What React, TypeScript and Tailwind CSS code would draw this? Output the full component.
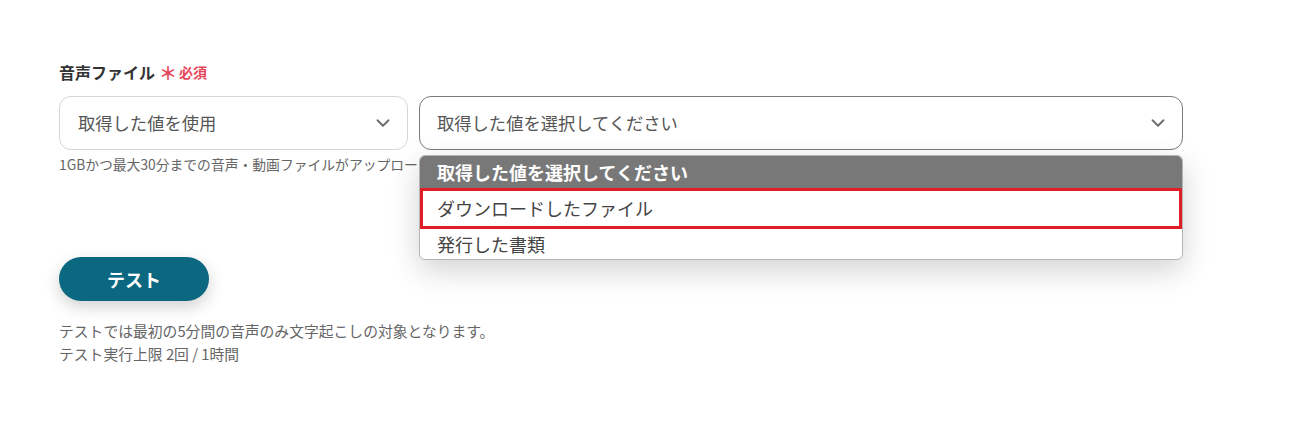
import React from "react";
import { ChevronDown } from "lucide-react";

const font = { fontFamily: '"Noto Sans CJK JP", "Noto Sans", sans-serif' };

export default function App() {
  return (
    <div className="w-[1312px] h-[428px] bg-white pl-[59px] pt-[60px]" style={font}>
      <div className="flex items-center h-[24px] gap-[4px]">
        <span className="text-[16px] font-bold text-[#333333]">音声ファイル</span>
        <span className="text-[14px] font-bold text-[#e8475b] flex items-center gap-[2px]">
          <span className="text-[18px] leading-none">＊</span>
          <span>必須</span>
        </span>
      </div>
      <div className="mt-[12px] flex gap-[11px]">
        <div className="w-[349px] h-[54px] rounded-[12px] border border-[#d6d6d6] flex items-center justify-between pl-[18px] pr-[13px]">
          <span className="text-[17.3px] text-[#555555]">取得した値を使用</span>
          <ChevronDown size={22} color="#6b6b6b" strokeWidth={2} />
        </div>
        <div className="relative w-[764px]">
          <div className="h-[54px] rounded-[12px] border border-[#7a7a7a] flex items-center justify-between pl-[17px] pr-[13px]">
            <span className="text-[17.3px] text-[#555555]">取得した値を選択してください</span>
            <ChevronDown size={22} color="#6b6b6b" strokeWidth={2} />
          </div>
          <div className="absolute left-0 top-[59px] w-full rounded-[6px] border border-[#b5b5b5] bg-white overflow-hidden shadow-[0_10px_30px_rgba(0,0,0,0.18)] z-10">
            <div className="h-[32px] bg-[#787878] flex items-center pl-[17px] pt-[1px] text-[18px] font-bold text-white">
              取得した値を選択してください
            </div>
            <div className="h-[41px] border-[3px] border-[#e41e26] flex items-center pl-[14px] text-[18px] text-[#444444]">
              ダウンロードしたファイル
            </div>
            <div className="h-[30px] flex items-center pl-[17px] text-[18px] text-[#444444]">
              発行した書類
            </div>
          </div>
        </div>
      </div>
      <div className="mt-[4px] h-[20px] leading-[20px] text-[13.8px] text-[#666666] whitespace-nowrap">
        1GBかつ最大30分までの音声・動画ファイルがアップロード
      </div>
      <button className="mt-[83px] w-[150px] h-[44px] rounded-full bg-[#0c6881] text-white text-[18px] font-bold shadow-[0_6px_16px_rgba(0,0,0,0.18)]">
        テスト
      </button>
      <div className="mt-[18px] text-[14.8px] text-[#666666]">
        <div className="leading-[23px]">テストでは最初の5分間の音声のみ文字起こしの対象となります。</div>
        <div className="leading-[23px]">テスト実行上限 2回 / 1時間</div>
      </div>
    </div>
  );
}
